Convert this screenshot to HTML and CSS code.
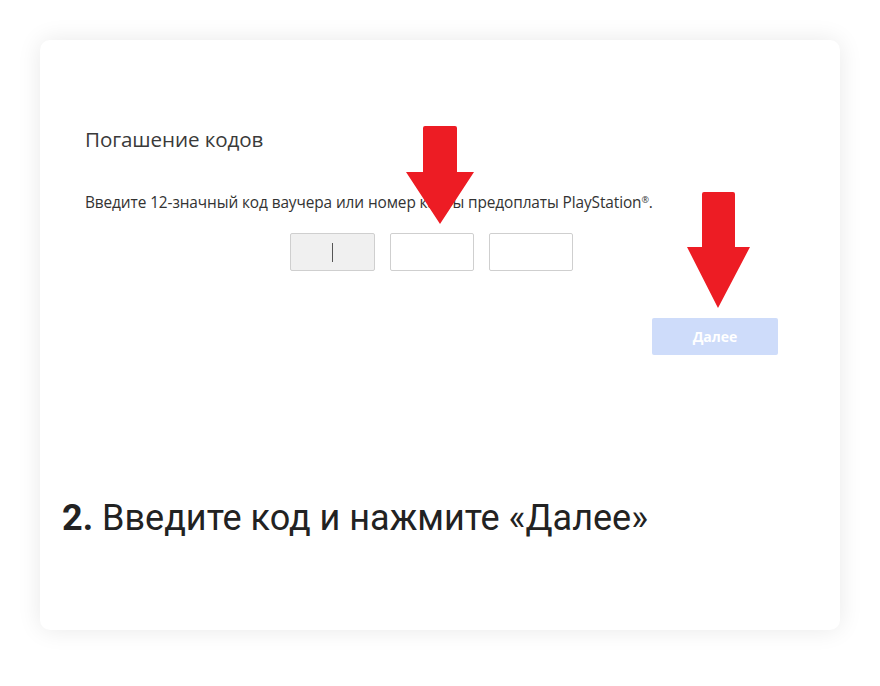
FILE: index.html
```html
<!DOCTYPE html>
<html lang="ru">
<head>
<meta charset="utf-8">
<title>Погашение кодов</title>
<link rel="stylesheet" href="styles.css">
</head>
<body>
<div class="card">
  <div class="shot">
    <h1 class="title">Погашение кодов</h1>
    <p class="desc">Введите 12-значный код ваучера или номер карты предоплаты PlayStation<sup>®</sup>.</p>
    <div class="inputs">
      <div class="box box-active"><span class="caret"></span></div>
      <div class="box"></div>
      <div class="box"></div>
    </div>
    <div class="actions">
      <button class="next">Далее</button>
    </div>
    <svg class="arrow arrow-one" width="72" height="100" viewBox="0 0 72 100">
      <path d="M19 2 Q19 0 21 0 L51 0 Q53 0 53 2 L53 46 L70 46 L36 98 L2 46 L19 46 Z" fill="#ed1c24"/>
    </svg>
    <svg class="arrow arrow-two" width="66" height="118" viewBox="0 0 66 118">
      <path d="M16 2 Q16 0 18 0 L47 0 Q49 0 49 2 L49 55 L64 55 L32 116 L1 55 L16 55 Z" fill="#ed1c24"/>
    </svg>
  </div>
  <p class="caption"><b>2.</b> Введите код и нажмите «Далее»</p>
</div>
</body>
</html>
```

FILE: styles.css
```css
* { box-sizing: border-box; }
html, body { margin: 0; padding: 0; background: #ffffff; }
body { padding: 40px; }
.card {
  width: 800px;
  height: 590px;
  background: #ffffff;
  border-radius: 10px;
  box-shadow: 0 0 24px rgba(0, 0, 0, 0.09);
  overflow: hidden;
}
.shot {
  position: relative;
  height: 420px;
  padding: 86px 0 0 45px;
  font-family: "Open Sans", "Liberation Sans", sans-serif;
  color: #333333;
}
.title {
  margin: 0;
  font-size: 20.6px;
  font-weight: 400;
  line-height: 26px;
  color: #3a3a3a;
  letter-spacing: -0.1px;
}
.desc {
  margin: 38px 0 0;
  font-size: 15.4px;
  line-height: 20px;
  color: #333333;
  letter-spacing: -0.1px;
}
.desc sup { font-size: 9px; vertical-align: 5px; }
.inputs {
  display: flex;
  gap: 15px;
  margin: 20px 0 0 205px;
}
.box {
  width: 84px;
  height: 38px;
  border: 1px solid #cfcfcf;
  border-radius: 2px;
  background: #ffffff;
  display: flex;
  align-items: center;
  justify-content: center;
}
.box-active { background: #f0f0f0; width: 85px; }
.caret { width: 1.5px; height: 19px; background: #555555; }
.actions {
  display: flex;
  justify-content: flex-end;
  padding-right: 62px;
  margin-top: 47px;
}
.next {
  width: 126px;
  height: 37px;
  border: 0;
  border-radius: 2px;
  background: #cedcfa;
  color: #ffffff;
  font-family: "Open Sans", "Liberation Sans", sans-serif;
  font-weight: 700;
  font-size: 14px;
}
.arrow { position: absolute; }
.arrow-one { left: 364px; top: 86px; }
.arrow-two { left: 646px; top: 152px; }
.caption {
  margin: 36px 0 0 22px;
  font-family: Roboto, "Liberation Sans", sans-serif;
  font-size: 36px;
  line-height: 44px;
  color: #222222;
}
.caption b { font-weight: 700; }
```
